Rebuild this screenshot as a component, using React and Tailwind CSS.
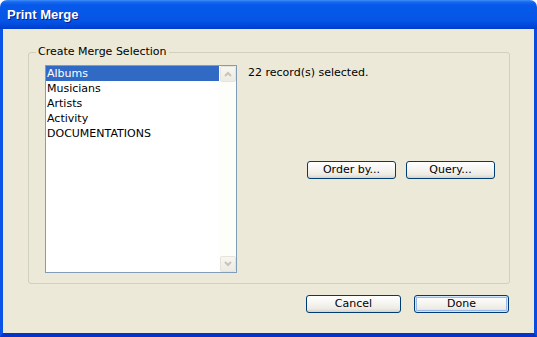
import React from 'react';

const items = ['Albums', 'Musicians', 'Artists', 'Activity', 'DOCUMENTATIONS'];

const XpButton = ({ label, width, isDefault }) => (
  <button
    className={`${width} h-[18px] flex items-center justify-center rounded-[3px] border border-[#003C74] bg-[linear-gradient(180deg,#FFFFFF_0%,#F6F5F1_45%,#ECEAE3_80%,#D8D2C7_100%)] text-[11px] leading-[14px] text-black ${
      isDefault ? 'shadow-[inset_0_0_0_1px_#CEE7FF,inset_0_0_0_2px_#98B8EC]' : ''
    }`}
  >
    {label}
  </button>
);

const ScrollArrow = ({ up }) => (
  <div className="w-[16px] h-[16px] flex items-center justify-center rounded-[2px] border border-[#E6E4DA] bg-[linear-gradient(180deg,#F7F6F1,#EDEBE3)]">
    <svg width="8" height="6" viewBox="0 0 8 6">
      <path
        d={up ? 'M1 5 L4 2 L7 5' : 'M1 1 L4 4 L7 1'}
        stroke="#C8C5B6"
        strokeWidth="2"
        fill="none"
      />
    </svg>
  </div>
);

export default function App() {
  return (
    <div className="w-[537px] h-[337px] flex flex-col bg-white font-['DejaVu_Sans',sans-serif]">
      {/* Title bar */}
      <div className="h-[29px] flex items-center pl-[7px] pt-[1px] rounded-t-[7px] bg-[linear-gradient(180deg,#3D8EF8_0px,#1A68F1_2px,#0659E9_5px,#0556E7_20px,#004ADB_25px,#003CCC_29px)]">
        <span className="font-['Liberation_Sans',sans-serif] font-bold text-[13px] text-white [text-shadow:1px_1px_0_#0A1E8A]">
          Print Merge
        </span>
      </div>

      {/* Dialog body */}
      <div className="flex-1 flex flex-col bg-[#ECE9D8] border-l-[3px] border-r-[3px] border-b-[4px] border-l-[#0A55E8] border-r-[#0A4CDD] border-b-[#0632C8] text-[11px] leading-[14px] text-black">
        <div className="ml-[25px] mt-[23px] w-[482px] h-[232px] flex flex-col border border-[#D0D0BF] rounded-[3px]">
          <div className="ml-[7px] -mt-[8px] px-[2px] w-fit h-[14px] bg-[#ECE9D8]">Create Merge Selection</div>

          <div className="flex mt-[6px]">
            {/* List box */}
            <div className="ml-[16px] w-[192px] h-[208px] flex border border-[#7F9DB9] bg-white">
              <div className="flex-1 flex flex-col">
                {items.map((it, i) => (
                  <div
                    key={it}
                    className={`h-[15px] leading-[15px] pl-[1px] ${i === 0 ? 'bg-[#316AC5] text-white' : ''}`}
                  >
                    {it}
                  </div>
                ))}
              </div>
              <div className="w-[17px] flex flex-col justify-between items-end bg-[#FDFDFA]">
                <ScrollArrow up />
                <ScrollArrow />
              </div>
            </div>

            {/* Right side */}
            <div className="flex-1 flex flex-col pl-[11px] pr-[14px] pt-[1px]">
              <div>22 record(s) selected.</div>
              <div className="mt-[81px] flex justify-end gap-[10px]">
                <XpButton label="Order by..." width="w-[89px]" />
                <XpButton label="Query..." width="w-[89px]" />
              </div>
            </div>
          </div>
        </div>

        <div className="mt-[11px] pr-[25px] flex justify-end gap-[13px]">
          <XpButton label="Cancel" width="w-[95px]" />
          <XpButton label="Done" width="w-[95px]" isDefault />
        </div>
      </div>
    </div>
  );
}
